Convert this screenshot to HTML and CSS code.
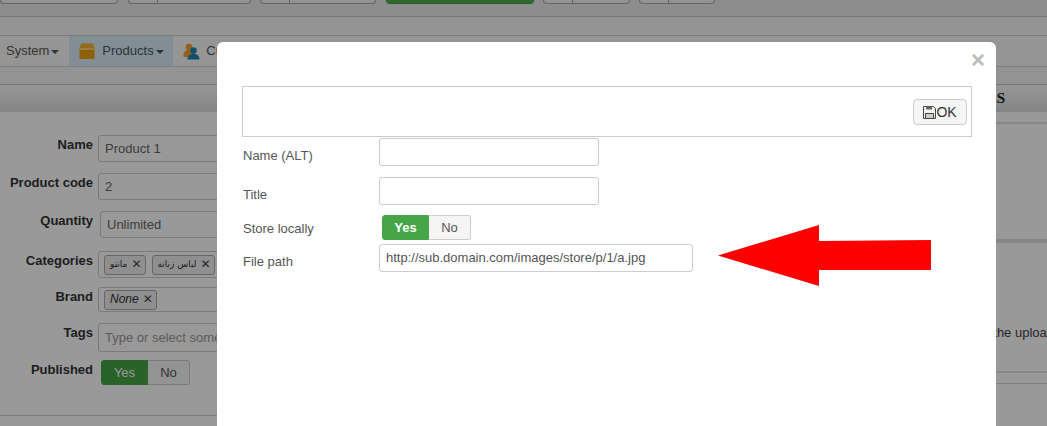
FILE: index.html
```html
<!DOCTYPE HTML>
<html>
<head>
    <meta charset="utf-8"/>
    <link rel="stylesheet" href="styles.css">
</head>
<body>
<div class="page">
    <div class="toolbar">
        <div class="tbtn w118"></div>
        <div class="tbtn split w123 m10"><span></span></div>
        <div class="tbtn split w116 m9"><span></span></div>
        <div class="tbtn green"></div>
        <div class="tbtn split w87 m9"><span></span></div>
        <div class="tbtn split w76 m9"><span></span></div>
    </div>
    <div class="subbar"></div>
    <div class="nav">
        <div class="nav-item first">System<i class="caret"></i></div>
        <div class="nav-item active">
            <svg class="nav-icon" width="16" height="16" viewBox="0 0 16 16">
                <path d="M2 0.5h12l1.5 5h-15z" fill="#f5b52e"/>
                <path d="M0.5 5h15v10a1 1 0 0 1-1 1h-13a1 1 0 0 1-1-1z" fill="#eda20f"/>
                <path d="M0.5 5h15v2h-15z" fill="#ffd36a"/>
            </svg>
            Products<i class="caret"></i>
        </div>
        <div class="nav-item">
            <svg class="nav-icon users" width="17" height="17" viewBox="0 0 17 17">
                <circle cx="6" cy="4" r="3.2" fill="#f0a030"/>
                <path d="M0.5 12c0-3.5 2-5 5.5-5s5 2 5 4l-3 3h-7.500z" fill="#f0a030"/>
                <circle cx="10.500" cy="7.500" r="3.200" fill="#1d86b4"/>
                <path d="M4.500 16.500c0-3.500 2-5.500 6-5.500s6 2 6 5.500z" fill="#1d86b4"/>
            </svg>
            Customers
        </div>
    </div>
    <div class="strip"></div>
    <div class="section-head">IMAGES</div>
    <div class="content">
        <div class="form">
            <div class="row r38">
                <label>Name</label>
                <div class="field">Product 1</div>
            </div>
            <div class="row r38">
                <label>Product code</label>
                <div class="field">2</div>
            </div>
            <div class="row r40">
                <label>Quantity</label>
                <div class="field shift2">Unlimited</div>
            </div>
            <div class="row r36">
                <label>Categories</label>
                <div class="field tags-field">
                    <span class="tag">مانتو<b>✕</b></span>
                    <span class="tag">لباس زنانه<b>✕</b></span>
                </div>
            </div>
            <div class="row r36">
                <label>Brand</label>
                <div class="field tags-field short">
                    <span class="tag"><em>None</em><b>✕</b></span>
                </div>
            </div>
            <div class="row r37">
                <label>Tags</label>
                <div class="field tall placeholder">Type or select some options</div>
            </div>
            <div class="row">
                <label>Published</label>
                <div class="toggle shift3">
                    <span class="yes plain">Yes</span><span class="no">No</span>
                </div>
            </div>
        </div>
        <div class="form-end"></div>
    </div>
    <div class="side">
        <div class="side-line"></div>
        <div class="side-line second"></div>
        <p class="side-text">Images are resized after the upload</p>
        <div class="side-line third"></div>
        <div class="side-line fourth"></div>
    </div>
</div>

<div class="backdrop"></div>

<div class="modal">
    <div class="close">×</div>
    <div class="upload-box">
        <button class="ok">
            <svg width="13" height="13" viewBox="0 0 13 13">
                <path d="M0.500 0.500h10l2 2v10h-12z" fill="none" stroke="#444" stroke-width="1"/>
                <path d="M3 0.500h6v3h-6z" fill="#666"/>
                <path d="M2.500 7.500h8v5h-8z" fill="#ccc" stroke="#444" stroke-width="1"/>
            </svg>OK
        </button>
    </div>
    <div class="mrow h39">
        <span class="mlabel">Name (ALT)</span>
        <div class="minput"></div>
    </div>
    <div class="mrow h38">
        <span class="mlabel">Title</span>
        <div class="minput"></div>
    </div>
    <div class="mrow h29">
        <span class="mlabel">Store locally</span>
        <div class="toggle mtoggle">
            <span class="yes">Yes</span><span class="no">No</span>
        </div>
    </div>
    <div class="mrow">
        <span class="mlabel">File path</span>
        <div class="minput wide">http://sub.domain.com/images/store/p/1/a.jpg</div>
    </div>
</div>

<svg class="arrow" width="214" height="62" viewBox="0 0 214 62">
    <path d="M0 30.500L101 0v16l112-1v30h-112v16z" fill="#ff0000"/>
</svg>
</body>
</html>
```

FILE: styles.css
```css
html, body {
    margin: 0;
    padding: 0;
    height: 100%;
    overflow: hidden;
}

body {
    position: relative;
    font-family: "Liberation Sans", Arial, sans-serif;
    font-size: 13px;
    color: #333;
    background: #fff;
}

.page {
    height: 426px;
    overflow: hidden;
    position: relative;
}

/* top bar */
.toolbar {
    display: flex;
    height: 16px;
    background: #ececec;
    border-bottom: 1px solid #c8c8c8;
    align-items: flex-start;
}

.tbtn {
    height: 3px;
    border: 1px solid #aaa;
    border-top: 0;
    border-radius: 0 0 4px 4px;
    background: #f4f4f4;
    box-sizing: content-box;
    display: flex;
}

.tbtn.split span {
    display: block;
    width: 28px;
    border-right: 1px solid #aaa;
}

.w118 { width: 116px; }
.w123 { width: 121px; }
.w116 { width: 114px; }
.w87 { width: 85px; }
.w76 { width: 74px; }
.m10 { margin-left: 10px; }
.m9 { margin-left: 9px; }

.tbtn.green {
    width: 146px;
    margin-left: 10px;
    background: #4caf50;
    border-color: #449d48;
}

.subbar {
    height: 18px;
    background: #f5f5f5;
    border-bottom: 1px solid #d0d0d0;
}

.nav {
    display: flex;
    height: 30px;
    background: #f8f8f8;
    border-bottom: 1px solid #d4d4d4;
    line-height: 30px;
}

.nav-item {
    padding: 0 10px;
    display: flex;
    align-items: center;
    color: #555;
}

.nav-item.first {
    padding-left: 6px;
}

.nav-item.active {
    width: 84px;
    background: #d9edf7;
    color: #4a5560;
}

.nav-icon {
    margin-right: 7px;
    flex: none;
}

.nav-icon.users {
    margin-right: 6px;
}

.caret {
    display: inline-block;
    margin-left: 2px;
    margin-top: 2px;
    border-top: 4px solid currentColor;
    border-left: 4px solid transparent;
    border-right: 4px solid transparent;
}

.strip {
    height: 17px;
    background: #f5f5f5;
    border-bottom: 1px solid #c4c4c4;
}

.section-head {
    height: 27px;
    line-height: 27px;
    text-align: right;
    padding-right: 42px;
    font-family: "Liberation Serif", serif;
    font-weight: bold;
    font-size: 15px;
    color: #222;
    background: linear-gradient(#fcfcfc, #dddddd);
}

.content {
    padding-top: 23px;
    width: 217px;
    overflow: hidden;
}

/* form behind the modal */
.row {
    display: flex;
    align-items: flex-start;
}

.row label {
    width: 93px;
    flex: none;
    text-align: right;
    font-weight: bold;
    margin-right: 5px;
    line-height: 20px;
}

.r38 { height: 38px; }
.r40 { height: 40px; }
.r36 { height: 36px; }
.r37 { height: 37px; }

.field {
    flex: none;
    width: 400px;
    height: 27px;
    box-sizing: border-box;
    border: 1px solid #ccc;
    border-radius: 3px;
    background: #fff;
    padding: 0 6px;
    line-height: 25px;
    font-size: 13px;
    color: #666;
}

.shift2 { margin-left: 2px; }
.shift3 { margin-left: 3px; }

.tall { height: 29px; }
.placeholder { color: #999; line-height: 27px; }

.tags-field {
    padding: 0 5px;
    display: flex;
    gap: 6px;
    align-items: center;
}

.short { height: 25px; }

.tag {
    display: inline-flex;
    align-items: center;
    height: 18px;
    padding: 0 3px 0 5px;
    gap: 4px;
    border: 1px solid #aaa;
    border-radius: 3px;
    background: #eee;
    font-family: "DejaVu Sans", sans-serif;
    font-size: 9px;
    color: #333;
    white-space: nowrap;
}

.tag em {
    font-family: "Liberation Sans", sans-serif;
    font-size: 12px;
}

.tag b {
    font-size: 12px;
    color: #444;
}

.toggle {
    display: flex;
    height: 25px;
    line-height: 23px;
    font-size: 13px;
    flex: none;
}

.toggle span {
    box-sizing: border-box;
    text-align: center;
    border: 1px solid #ccc;
}

.toggle .yes {
    width: 47px;
    background: #46a546;
    border-color: #46a546;
    border-radius: 3px 0 0 3px;
    color: #fff;
    font-weight: bold;
}

.toggle .yes.plain {
    font-weight: normal;
}

.toggle .no {
    width: 42px;
    background: #f5f5f5;
    border-left: 0;
    border-radius: 0 3px 3px 0;
    color: #555;
}

.form-end {
    position: absolute;
    left: 0;
    top: 415px;
    width: 217px;
    border-top: 1px solid #d0d0d0;
}

/* right column, only its edge shows */
.side {
    position: absolute;
    left: 996px;
    top: 112px;
    width: 51px;
    height: 314px;
    overflow: hidden;
}

.side-line {
    position: absolute;
    left: 0;
    right: 0;
    top: 10px;
    height: 2px;
    background: #e2e2e2;
}

.side-line.second { top: 127px; height: 4px; background: #e0e0e0; }
.side-line.third { top: 259px; height: 2px; background: #e2e2e2; }
.side-line.fourth { top: 271px; height: 1px; background: #d6d6d6; }

.side-text {
    position: absolute;
    right: -7px;
    top: 213px;
    margin: 0;
    white-space: nowrap;
    font-size: 13px;
    color: #444;
}

.backdrop {
    position: absolute;
    left: 0;
    top: 0;
    width: 100%;
    height: 100%;
    background: rgba(0, 0, 0, 0.4);
}

/* modal */
.modal {
    position: absolute;
    left: 217px;
    top: 42px;
    width: 779px;
    height: 400px;
    box-sizing: border-box;
    padding: 44px 24px 0 25px;
    background: #fff;
    border-radius: 6px 6px 0 0;
    color: #555;
}

.close {
    position: absolute;
    right: 11px;
    top: 6px;
    font-size: 24px;
    line-height: 24px;
    font-weight: bold;
    color: #bbb;
}

.upload-box {
    height: 51px;
    box-sizing: border-box;
    border: 1px solid #ccc;
    display: flex;
    justify-content: flex-end;
    align-items: flex-start;
    padding: 12px 4px 0 0;
}

.ok {
    width: 54px;
    height: 26px;
    padding: 0;
    box-sizing: border-box;
    border: 1px solid #ccc;
    border-radius: 4px;
    background: #f5f5f5;
    font-family: "Liberation Sans", sans-serif;
    font-size: 14px;
    color: #333;
    display: flex;
    align-items: center;
    justify-content: center;
}

.mrow {
    display: flex;
    align-items: center;
    padding-left: 1px;
}

.mlabel {
    width: 136px;
    flex: none;
    font-size: 13px;
    padding-top: 6px;
}

.h39 { height: 39px; margin-top: 1px; align-items: flex-start; }
.h38 { height: 38px; align-items: flex-start; }
.h29 { height: 29px; align-items: flex-start; }

.h39 .mlabel, .h38 .mlabel { padding-top: 10px; }
.h29 .mlabel { padding-top: 6px; }

.minput {
    width: 220px;
    height: 28px;
    box-sizing: border-box;
    border: 1px solid #ccc;
    border-radius: 3px;
    background: #fff;
    padding: 0 6px;
    line-height: 26px;
    font-size: 13px;
    color: #555;
}

.minput.wide {
    width: 314px;
}

.mtoggle {
    margin-left: 3px;
}

.arrow {
    position: absolute;
    left: 718px;
    top: 225px;
}
```
